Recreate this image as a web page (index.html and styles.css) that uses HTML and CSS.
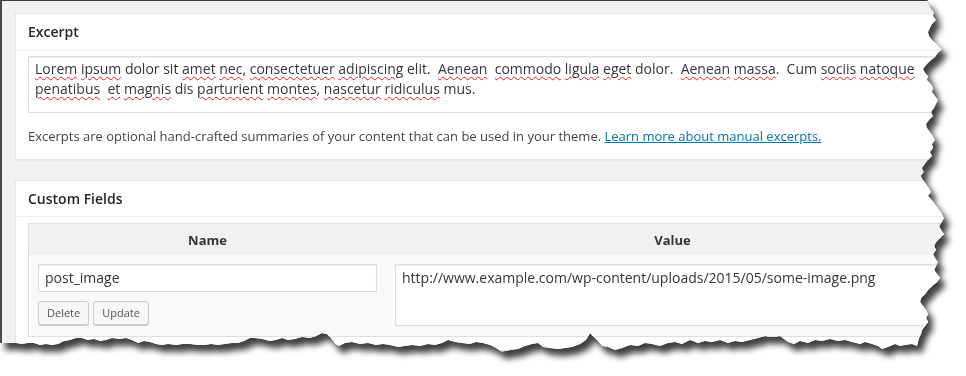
FILE: index.html
```html
<!DOCTYPE html>
<html>
<head>
<meta charset="utf-8">
<link rel="stylesheet" href="styles.css">
</head>
<body>
<div class="shot">
  <div class="paper">
    <div class="postbox">
      <h2 class="hndle">Excerpt</h2>
      <div class="inside">
        <div class="excerpt-area"><span class="sp">Lorem</span> <span class="sp">ipsum</span> dolor sit <span class="sp">amet</span> <span class="sp">nec</span>, <span class="sp">consectetuer</span> <span class="sp">adipiscing</span> elit.  <span class="sp">Aenean</span>  <span class="sp">commodo</span> <span class="sp">ligula</span> <span class="sp">eget</span> dolor.  <span class="sp">Aenean</span> <span class="sp">massa</span>.  Cum <span class="sp">sociis</span> <span class="sp">natoque</span>
<span class="sp">penatibus</span>  <span class="sp">et</span> <span class="sp">magnis</span> dis <span class="sp">parturient</span> <span class="sp">montes</span>, <span class="sp">nascetur</span> <span class="sp">ridiculus</span> mus.</div>
        <p class="help">Excerpts are optional hand-crafted summaries of your content that can be used in your theme. <a href="#">Learn more about manual excerpts.</a></p>
      </div>
    </div>
    <div class="postbox">
      <h2 class="hndle">Custom Fields</h2>
      <div class="inside">
        <table class="custom">
          <thead>
            <tr><th class="col-name">Name</th><th>Value</th></tr>
          </thead>
          <tbody>
            <tr>
              <td class="col-name">
                <div class="field">post_image</div>
                <div class="buttons"><span class="btn">Delete</span><span class="btn">Update</span></div>
              </td>
              <td><div class="value-area">http://www.example.com/wp-content/uploads/2015/05/some-image.png</div></td>
            </tr>
          </tbody>
        </table>
      </div>
    </div>
  </div>
</div>
</body>
</html>
```
FILE: styles.css
```css
html, body {
  margin: 0;
  padding: 0;
  background: #ffffff;
}

.shot {
  width: 966px;
  height: 376px;
  filter: drop-shadow(0 0 0.6px rgba(0,0,0,0.95)) drop-shadow(5px 7px 3px rgba(0,0,0,0.75));
}

.paper {
  box-sizing: border-box;
  width: 966px;
  height: 376px;
  overflow: hidden;
  background: #f1f1f1;
  border-top: 1px solid #3a3a3a;
  border-left: 2px solid #4a4a4a;
  padding: 12px 0 0 13px;
  font-family: "Open Sans", "Noto Sans", sans-serif;
  color: #444;
  clip-path: polygon(
    0px 0px, 927px 0px, 929px 4px, 931px 8px, 934px 12px, 933px 16px, 936px 20px, 932px 24px, 930px 28px, 928px 32px, 929px 36px,
    932px 40px, 937px 44px, 942px 49px, 938px 53px, 935px 57px, 930px 61px, 926px 65px, 923px 69px, 925px 73px, 928px 76px,
    927px 80px, 931px 84px, 933px 88px, 932px 92px, 935px 96px, 938px 100px, 936px 104px, 934px 108px, 931px 112px, 933px 116px,
    929px 120px, 926px 124px, 927px 128px, 930px 132px, 933px 136px, 935px 140px, 932px 144px, 933px 148px, 930px 152px, 932px 156px,
    928px 160px, 925px 164px, 922px 168px, 924px 172px, 921px 176px, 923px 180px, 926px 184px, 929px 188px, 931px 192px, 928px 196px,
    932px 200px, 935px 204px, 938px 208px, 941px 212px, 944px 218px, 942px 222px, 939px 226px, 941px 230px, 944px 234px, 940px 238px,
    936px 242px, 934px 246px, 936px 250px, 933px 254px, 935px 258px, 938px 262px, 936px 266px, 934px 270px, 937px 274px, 940px 278px,
    937px 282px, 932px 286px, 928px 290px, 925px 294px, 921px 298px, 920px 302px, 923px 306px, 926px 310px, 928px 314px, 926px 318px,
    928px 322px, 925px 326px, 922px 330px, 921px 334px, 919px 338px, 918px 342px, 917px 346px,
    912px 344px, 905px 345px, 900px 346px, 895px 344px, 888px 347px, 882px 349px, 878px 346px, 872px 344px, 865px 342px, 860px 344px,
    852px 342px, 845px 340px, 838px 341px, 830px 339px, 822px 341px, 815px 340px, 808px 343px, 800px 341px, 794px 344px, 788px 342px,
    780px 336px, 772px 337px, 765px 336px, 758px 338px, 750px 340px, 742px 342px, 735px 341px, 728px 343px, 720px 340px, 712px 342px,
    705px 341px, 698px 343px, 690px 340px, 682px 344px, 675px 342px, 668px 343px, 660px 346px, 652px 344px, 645px 343px, 638px 346px,
    630px 345px, 622px 348px, 615px 350px, 608px 347px, 602px 346px, 597px 340px, 593px 336px, 590px 333px, 586px 340px, 580px 344px,
    572px 347px, 565px 348px, 558px 349px, 550px 348px, 543px 347px, 538px 343px, 532px 344px, 525px 346px, 518px 349px, 510px 350px,
    502px 352px, 496px 348px, 490px 345px, 483px 343px, 476px 342px, 470px 344px, 462px 343px, 455px 342px, 448px 340px, 442px 343px,
    435px 345px, 428px 344px, 420px 346px, 412px 345px, 405px 346px, 398px 347px, 390px 345px, 383px 344px, 376px 345px, 368px 343px,
    360px 344px, 352px 342px, 345px 343px, 339px 346px, 335px 344px, 331px 338px, 327px 334px, 322px 333px, 316px 336px, 310px 338px,
    302px 337px, 295px 339px, 288px 340px, 282px 338px, 276px 340px, 270px 341px, 262px 339px, 255px 338px, 250px 338px, 244px 341px,
    238px 343px, 232px 343px, 225px 344px, 218px 345px, 211px 344px, 205px 345px, 198px 345px, 190px 344px, 183px 344px, 176px 345px,
    168px 344px, 162px 345px, 156px 344px, 150px 342px, 144px 341px, 138px 343px, 132px 340px, 126px 338px, 120px 339px, 112px 338px,
    106px 340px, 100px 341px, 94px 339px, 88px 340px, 82px 338px, 76px 338px, 70px 340px, 64px 341px, 58px 344px, 52px 345px,
    46px 344px, 40px 345px, 34px 343px, 28px 343px, 22px 344px, 16px 343px, 10px 343px, 4px 343px, 0px 343px
  );
}

.postbox {
  box-sizing: border-box;
  width: 958px;
  background: #fff;
  border: 1px solid #e5e5e5;
  box-shadow: 0 1px 1px rgba(0,0,0,0.04);
  margin-bottom: 20px;
}

.hndle {
  margin: 0;
  padding: 8px 12px;
  height: 19px;
  line-height: 19px;
  font-size: 14px;
  font-weight: 600;
  color: #23282d;
  border-bottom: 1px solid #eee;
}

.inside {
  padding: 6px 12px 13px;
}

.excerpt-area {
  box-sizing: border-box;
  height: 57px;
  border: 1px solid #ddd;
  box-shadow: inset 0 1px 2px rgba(0,0,0,0.07);
  padding: 2px 6px;
  font-size: 14px;
  line-height: 20px;
  color: #32373c;
  white-space: pre;
  overflow: hidden;
}

.sp {
  text-decoration: underline wavy #e0201b;
  text-decoration-thickness: 1px;
  text-underline-offset: 2px;
}

.help {
  margin: 13px 0 0;
  font-size: 13px;
  line-height: 20px;
}

.help a {
  color: #0073aa;
  text-decoration: underline;
}

.custom {
  width: 100%;
  border-collapse: collapse;
  border: 1px solid #dfdfdf;
  background: #f9f9f9;
  table-layout: fixed;
}

.custom th {
  background: #f1f1f1;
  height: 31px;
  padding: 0;
  font-size: 13px;
  font-weight: 700;
  color: #32373c;
  text-align: center;
}

.custom th.col-name, .custom td.col-name {
  width: 357px;
}

.custom td {
  vertical-align: top;
  padding: 9px 9px 10px 9px;
}

.field {
  box-sizing: border-box;
  height: 28px;
  border: 1px solid #ddd;
  background: #fff;
  box-shadow: inset 0 1px 2px rgba(0,0,0,0.07);
  padding: 0 6px;
  line-height: 26px;
  font-size: 14px;
  color: #32373c;
}

.buttons {
  display: flex;
  gap: 4px;
  margin-top: 9px;
}

.btn {
  box-sizing: border-box;
  height: 24px;
  line-height: 22px;
  padding: 0 8px;
  font-size: 11px;
  color: #555;
  background: #f7f7f7;
  border: 1px solid #ccc;
  border-radius: 3px;
  box-shadow: 0 1px 0 #ccc;
}

.value-area {
  box-sizing: border-box;
  height: 62px;
  border: 1px solid #ddd;
  background: #fff;
  box-shadow: inset 0 1px 2px rgba(0,0,0,0.07);
  padding: 3px 6px;
  font-size: 14px;
  line-height: 20px;
  color: #32373c;
}
```
